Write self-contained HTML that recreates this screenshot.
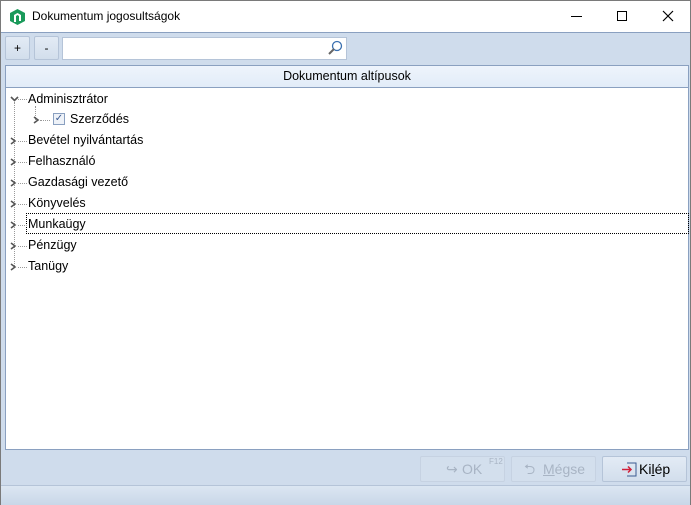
<!DOCTYPE html>
<html><head><style>
*{margin:0;padding:0;box-sizing:border-box}
body{width:691px;height:505px;overflow:hidden;font-family:"Liberation Sans",sans-serif;font-size:12px;color:#000;background:#cfdcec;position:relative}
.win{position:absolute;left:0;top:0;width:691px;height:505px;border:1px solid #7a7a7a}
.title{position:absolute;left:0;top:0;width:689px;height:31px;background:#fff}
.title span{position:absolute;left:31px;top:8px;font-size:12px}
.ab{position:absolute}
.btn{position:absolute;border:1px solid #b5c4d8;border-radius:2px;background:linear-gradient(#e3ebf5,#d2deec)}
.tree{position:absolute;left:4px;top:87px;width:684px;height:362px;background:#fff;border:1px solid #8aa0c0;border-top:none}
.row{position:absolute;left:22px;font-size:12.5px}
.arr{position:absolute;left:4px;width:7px;height:8px}
.dot{position:absolute;border-top:1px dotted #999;width:9px}
</style></head><body>
<div class="win">
<div class="title">
<svg class="ab" style="left:9px;top:8px" width="15" height="16" viewBox="0 0 15 16"><path d="M7.5 0L15 4v8l-7.5 4L0 12V4z" fill="#1a9a5a"/><path d="M4 13V6l3.5-2L11 6v6H9V7l-1.5-1L6 7v6z" fill="#fff"/></svg>
<span>Dokumentum jogosultságok</span>
<div class="ab" style="left:570px;top:15px;width:11px;height:1px;background:#000"></div>
<div class="ab" style="left:616px;top:10px;width:10px;height:10px;border:1px solid #000"></div>
<svg class="ab" style="left:661px;top:9px" width="12" height="12"><path d="M1 1L11 11M11 1L1 11" stroke="#000" stroke-width="1.2"/></svg>
</div>
<div class="ab" style="left:0;top:31px;width:689px;height:1px;background:#8aa0c0"></div>
<div class="btn" style="left:4px;top:35px;width:25px;height:24px;text-align:center;line-height:22px">+</div>
<div class="btn" style="left:33px;top:35px;width:25px;height:24px;text-align:center;line-height:22px">-</div>
<div class="ab" style="left:61px;top:36px;width:285px;height:23px;background:#fff;border:1px solid #b5c4d8"></div>
<svg class="ab" style="left:326px;top:39px" width="16" height="16"><circle cx="10" cy="6" r="4.5" fill="none" stroke="#3a70b0" stroke-width="1.3"/><path d="M7 9L2 14" stroke="#666" stroke-width="2"/></svg>
<div class="ab" style="left:4px;top:64px;width:684px;height:23px;border:1px solid #8aa0c0;background:linear-gradient(#eef4fc,#e2ecf8);text-align:center;line-height:21px;font-size:12.5px">Dokumentum altípusok</div>
<div class="tree">
<div class="ab" style="left:8px;top:14px;height:166px;border-left:1px dotted #999"></div>
<svg class="arr" style="left:4px;top:8px;width:9px;height:6px"><path d="M1 1l3.5 3.5L8 1" stroke="#555" stroke-width="1.6" fill="none"/></svg>
<div class="dot" style="left:12px;top:11px"></div><div class="row" style="top:4px">Adminisztrátor</div>
<div class="ab" style="left:29px;top:18px;height:14px;border-left:1px dotted #999"></div>
<svg class="arr" style="left:27px;top:28px"><path d="M1 1l4 3-4 3" stroke="#555" stroke-width="1.6" fill="none"/></svg>
<div class="dot" style="left:34px;top:32px;width:10px"></div>
<div class="ab" style="left:47px;top:25px;width:12px;height:12px;border:1px solid #8aa0c0;background:#eef2f8;font-size:10px;line-height:10px;text-align:center;color:#3a5a90">✓</div>
<div class="row" style="left:64px;top:24px">Szerződés</div>
<svg class="arr" style="top:49px"><path d="M1 1l4 3-4 3" stroke="#555" stroke-width="1.6" fill="none"/></svg><div class="dot" style="left:12px;top:53px"></div><div class="row" style="top:45px">Bevétel nyilvántartás</div>
<svg class="arr" style="top:70px"><path d="M1 1l4 3-4 3" stroke="#555" stroke-width="1.6" fill="none"/></svg><div class="dot" style="left:12px;top:74px"></div><div class="row" style="top:66px">Felhasználó</div>
<svg class="arr" style="top:91px"><path d="M1 1l4 3-4 3" stroke="#555" stroke-width="1.6" fill="none"/></svg><div class="dot" style="left:12px;top:95px"></div><div class="row" style="top:87px">Gazdasági vezető</div>
<svg class="arr" style="top:112px"><path d="M1 1l4 3-4 3" stroke="#555" stroke-width="1.6" fill="none"/></svg><div class="dot" style="left:12px;top:116px"></div><div class="row" style="top:108px">Könyvelés</div>
<div class="ab" style="left:20px;top:125px;width:663px;height:21px;border:1px dotted #000"></div>
<svg class="arr" style="top:133px"><path d="M1 1l4 3-4 3" stroke="#555" stroke-width="1.6" fill="none"/></svg><div class="dot" style="left:12px;top:137px"></div><div class="row" style="top:129px">Munkaügy</div>
<svg class="arr" style="top:154px"><path d="M1 1l4 3-4 3" stroke="#555" stroke-width="1.6" fill="none"/></svg><div class="dot" style="left:12px;top:158px"></div><div class="row" style="top:150px">Pénzügy</div>
<svg class="arr" style="top:175px"><path d="M1 1l4 3-4 3" stroke="#555" stroke-width="1.6" fill="none"/></svg><div class="dot" style="left:12px;top:179px"></div><div class="row" style="top:171px">Tanügy</div>
</div>
<div class="btn" style="left:419px;top:455px;width:85px;height:26px;border-color:#c6d2e2;background:#d3dfed;color:#a8b4c4;line-height:24px;padding-left:41px;font-size:14px">OK<span style="position:absolute;left:68px;top:-7px;font-size:8px">F12</span><span style="position:absolute;left:25px;top:0">↪</span></div>
<div class="btn" style="left:510px;top:455px;width:85px;height:26px;border-color:#c6d2e2;background:#d3dfed;color:#a8b4c4;line-height:24px;padding-left:31px;font-size:14px"><span style="position:absolute;left:12px">⮌</span><u>M</u>égse</div>
<div class="btn" style="left:601px;top:455px;width:85px;height:26px;line-height:24px;padding-left:36px;font-size:14px">Ki<u>l</u>ép
<svg class="ab" style="left:19px;top:5px" width="16" height="15"><path d="M5 1h9v13H5" fill="none" stroke="#3a5a90"/><path d="M0 7.5h9M6 4.5l3 3-3 3" stroke="#d0203a" stroke-width="1.5" fill="none"/></svg></div>
<div class="ab" style="left:0;top:484px;width:689px;height:20px;background:linear-gradient(#dce6f2,#c9d7e8);border-top:1px solid #b5c4d8"></div>
</div>
</body></html>
